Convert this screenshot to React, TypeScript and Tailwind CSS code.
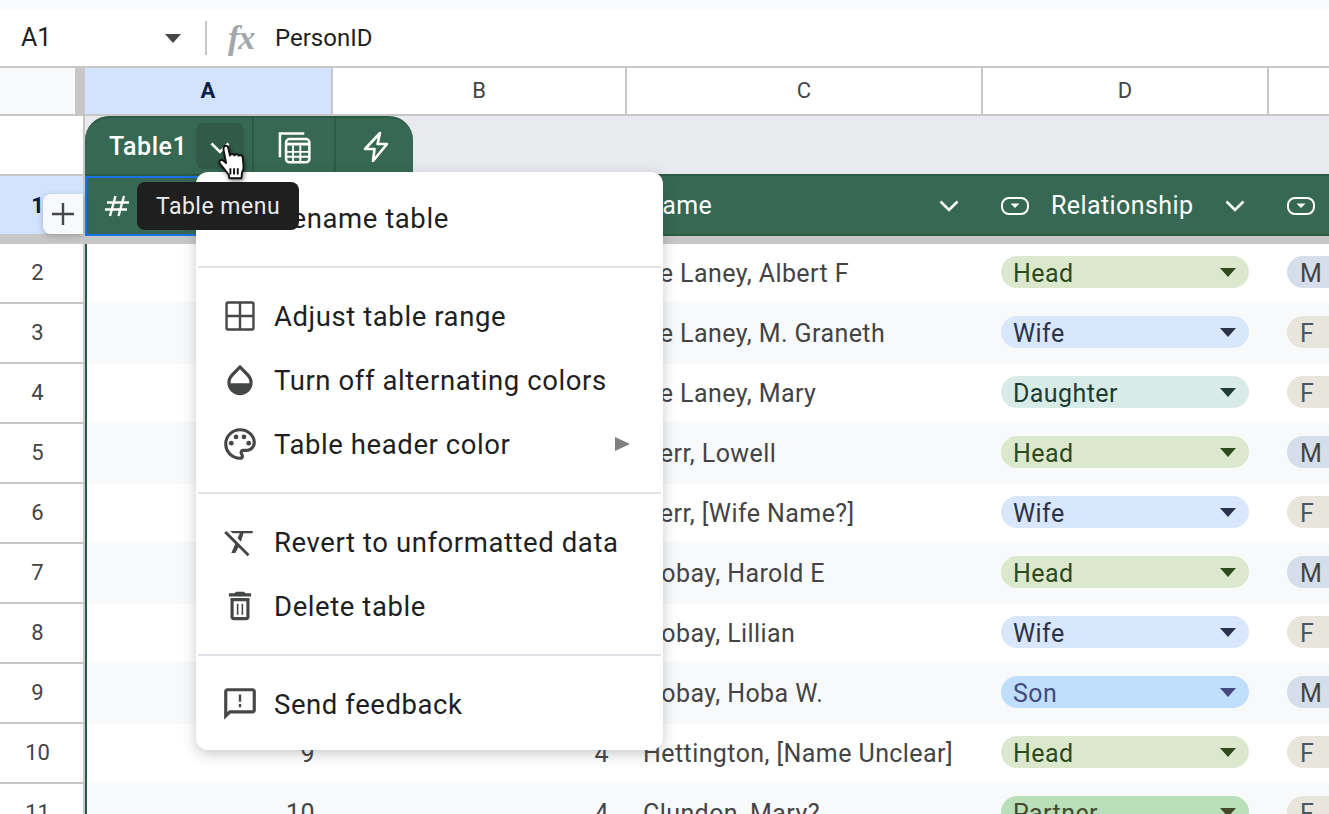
import React from 'react';

const pillStyles = {
  Head: { box: 'bg-[#dce8cd] text-[#2e4a1c]', caret: '#2e4a1c' },
  Wife: { box: 'bg-[#d9e7fc] text-[#2b3349]', caret: '#2b3349' },
  Daughter: { box: 'bg-[#d9ebe7] text-[#1b3b33]', caret: '#1b3b33' },
  Son: { box: 'bg-[#bfdffc] text-[#454a7e]', caret: '#454a7e' },
  Partner: { box: 'bg-[#b9e0b9] text-[#45492a]', caret: '#45492a' },
};

const rows = [
  { n: 2, a: '', b: '', name: 'De Laney, Albert F', rel: 'Head', sex: 'M' },
  { n: 3, a: '', b: '', name: 'De Laney, M. Graneth', rel: 'Wife', sex: 'F' },
  { n: 4, a: '', b: '', name: 'De Laney, Mary', rel: 'Daughter', sex: 'F' },
  { n: 5, a: '', b: '', name: 'Derr, Lowell', rel: 'Head', sex: 'M' },
  { n: 6, a: '', b: '', name: 'Derr, [Wife Name?]', rel: 'Wife', sex: 'F' },
  { n: 7, a: '', b: '', name: 'Hobay, Harold E', rel: 'Head', sex: 'M' },
  { n: 8, a: '', b: '', name: 'Hobay, Lillian', rel: 'Wife', sex: 'F' },
  { n: 9, a: '', b: '', name: 'Hobay, Hoba W.', rel: 'Son', sex: 'M' },
  { n: 10, a: '9', b: '4', name: 'Hettington, [Name Unclear]', rel: 'Head', sex: 'F' },
  { n: 11, a: '10', b: '4', name: 'Clundon, Mary?', rel: 'Partner', sex: 'F' },
] as const;

const Caret = ({ color, className }: { color: string; className?: string }) => (
  <svg width="16" height="9" viewBox="0 0 16 9" className={className}>
    <path d="M0 0h16L8 9z" fill={color} />
  </svg>
);

const Chevron = ({ className }: { className?: string }) => (
  <svg width="20" height="12" viewBox="0 0 20 12" className={className}>
    <path d="M1.500 1.500 10 10l8.500-8.500" fill="none" stroke="#fff" strokeWidth="2.600" />
  </svg>
);

const DropdownType = () => (
  <svg width="28" height="18" viewBox="0 0 28 18" className="shrink-0">
    <rect x="1" y="1" width="26" height="16" rx="7" fill="none" stroke="#fff" strokeWidth="2" />
    <path d="M9.500 6.500h9L14 11z" fill="#fff" />
  </svg>
);

const HashIcon = () => (
  <svg width="24" height="24" viewBox="0 0 24 24" fill="none" className="shrink-0">
    <path d="M10.500 2 5 22M19 2l-5.500 20M2 8.500h22M0 15.500h22" stroke="#fff" strokeWidth="2.400" />
  </svg>
);

const MenuIcon = ({ children }: { children: React.ReactNode }) => (
  <svg width="38" height="38" viewBox="0 0 24 24" fill="#444746" className="shrink-0">
    {children}
  </svg>
);

const MenuItem = ({ icon, label, arrow }: { icon: React.ReactNode; label: string; arrow?: boolean }) => (
  <div className="flex h-16 items-center gap-[15px] pl-[25px] pr-[33px]">
    <MenuIcon>{icon}</MenuIcon>
    <span className="flex-1 pt-[2px] text-[27.5px] tracking-[0.58px] text-[#1f1f1f]">{label}</span>
    {arrow && (
      <svg width="15" height="14" viewBox="0 0 15 14">
        <path d="M0 0l15 7-15 7z" fill="#808080" />
      </svg>
    )}
  </div>
);

const Divider = () => <div className="mx-[2px] h-[2px] bg-[#e1e0e6]" />;

const BodyRow = ({ row }: { row: (typeof rows)[number] }) => {
  const alt = row.n % 2 === 1;
  const pill = pillStyles[row.rel];
  return (
    <div className="flex h-[60px]">
      <div className="flex w-[85px] shrink-0 items-center justify-center border-r-2 border-b-2 border-[#c7c7c7] bg-white pr-[8px] pb-[1px] text-[22px] text-[#444]">
        {row.n}
      </div>
      <div className="min-w-0 flex-1 border-l-2 border-[#2a5a45]">
        <div
          className={`grid h-full grid-cols-[246px_294px_356px_286px_1fr] items-center text-[25px] tracking-[0.42px] text-[#444] ${
            alt ? 'bg-[#f8f9fb] shadow-[0_-2px_0_#f8f9fb]' : 'bg-white'
          }`}
        >
          <div className="pr-[18px] text-right">{row.a}</div>
          <div className="pr-[18px] text-right">{row.b}</div>
          <div className="pl-[16px] whitespace-nowrap">{row.name}</div>
          <div className="pb-1 pl-[18px]">
            <div className={`flex h-8 w-[248px] items-center justify-between rounded-full pl-[12px] pr-[13px] ${pill.box}`}>
              <span className="pt-[3px]">{row.rel}</span>
              <Caret color={pill.caret} />
            </div>
          </div>
          <div className="pb-1 pl-[18px]">
            <div
              className={`flex h-8 w-[248px] items-center rounded-full pl-[13px] pt-[3px] ${
                row.sex === 'M' ? 'bg-[#d5deea] text-[#444]' : 'bg-[#e8e5dc] text-[#4a5566]'
              }`}
            >
              {row.sex}
            </div>
          </div>
        </div>
      </div>
    </div>
  );
};

const App = () => {
  return (
    <div className="relative h-[814px] w-[1329px] overflow-hidden bg-white font-['Roboto',sans-serif]">
      <div className="h-[10px] bg-[#f9fbfd]" />

      {/* formula bar */}
      <div className="flex h-[56px] items-center text-[25px] text-[#1f1f1f]">
        <span className="w-[165px] pl-[21px]">A1</span>
        <Caret color="#444746" />
        <div className="ml-[24px] h-[34px] w-[2px] bg-[#c7c7c7]" />
        <span className="ml-[21px] w-[47px] font-['Liberation_Serif',serif] text-[34px] font-bold italic leading-none tracking-[-1px] text-[#a3a7ab]">
          fx
        </span>
        <span className="text-[24px]">PersonID</span>
      </div>

      {/* column letters */}
      <div className="grid h-[50px] grid-cols-[85px_248px_294px_356px_286px_1fr] border-y-2 border-[#c7c7c7] text-[22px] text-[#444]">
        <div className="mr-0 border-r-[10px] border-[#c7c7c7] bg-[#f8f9fa]" />
        <div className="flex items-center justify-center border-r-2 border-[#c7c7c7] bg-[#d3e3fd] pb-[2px] font-bold text-[#041e49]">A</div>
        <div className="flex items-center justify-center border-r-2 border-[#c7c7c7] pb-[2px]">B</div>
        <div className="flex items-center justify-center border-r-2 border-[#c7c7c7] pb-[2px]">C</div>
        <div className="flex items-center justify-center border-r-2 border-[#c7c7c7] pb-[2px]">D</div>
        <div />
      </div>

      {/* table tab */}
      <div className="flex h-[58px]">
        <div className="w-[85px] shrink-0 border-r-2 border-[#c7c7c7] bg-white" />
        <div className="flex-1 bg-[#e8eaed]">
          <div className="flex h-full w-[328px] items-stretch rounded-t-[24px] border-t-2 border-[#2b5a46] bg-[#366853] text-white">
            <div className="flex w-[169px] items-center justify-between border-r-2 border-[#2b5a46] pl-[24px] pr-[8px]">
              <span className="pt-[2px] text-[25px] font-medium tracking-[0.5px]">Table1</span>
              <div className="flex h-[46px] w-[48px] items-center justify-center rounded-lg bg-[#2f5b48]">
                <Chevron className="mt-1" />
              </div>
            </div>
            <div className="flex w-[82px] items-center justify-center border-r-2 border-[#2b5a46] pt-[2px]">
              <svg width="33" height="33" viewBox="0 0 34 34" fill="none">
                <path d="M2 27V2.500h25" stroke="#fff" strokeWidth="2.600" />
                <rect x="8.300" y="8.300" width="24" height="24" rx="3.500" stroke="#fff" strokeWidth="2.600" />
                <path d="M8.300 12h24v3H8.300z" fill="#fff" />
                <path d="M15.500 15v16M23 15v16M9 21.500h23M9 26.500h23" stroke="#fff" strokeWidth="2" />
              </svg>
            </div>
            <div className="flex flex-1 items-center justify-center pl-[2px] pt-[2px]">
              <svg width="26" height="32" viewBox="0 0 26 32" fill="none">
                <path d="M17 2 2 18h9.500L10 30l14-17h-9.500z" stroke="#fff" strokeWidth="2.600" strokeLinejoin="round" />
              </svg>
            </div>
          </div>
        </div>
      </div>

      {/* table header row */}
      <div className="flex h-[62px]">
        <div className="flex w-[85px] shrink-0 items-center justify-center border-y-2 border-r-2 border-[#c7c7c7] bg-[#d3e3fd] pr-[8px] text-[22px] font-bold text-[#041e49]">
          1
        </div>
        <div className="grid flex-1 grid-cols-[248px_294px_356px_286px_1fr] items-center border-y-2 border-[#2b5a46] bg-[#366853] text-[25px] tracking-[0.42px] text-white">
          <div className="flex h-[60px] items-center border-2 border-[#1a73e8] pl-[18px]">
            <HashIcon />
          </div>
          <div className="flex items-center pl-[20px]">
            <HashIcon />
          </div>
          <div className="flex items-center justify-between pl-[17px] pr-[24px]">
            <span>Name</span>
            <Chevron />
          </div>
          <div className="flex items-center pl-[18px] pr-[24px]">
            <DropdownType />
            <span className="ml-[22px] flex-1">Relationship</span>
            <Chevron />
          </div>
          <div className="flex items-center pl-[18px]">
            <DropdownType />
          </div>
        </div>
      </div>

      <div className="h-2 bg-[#c7c7c7]" />

      {rows.map((row) => (
        <BodyRow key={row.n} row={row} />
      ))}

      {/* insert row button */}
      <div className="absolute left-[43px] top-[194px] flex h-10 w-10 items-center justify-center rounded-l-lg bg-[#f8f9fd] shadow-[0_2px_6px_rgba(60,64,67,0.3)]">
        <svg width="22" height="22" viewBox="0 0 22 22">
          <path d="M9.800 0h2.400v9.800H22v2.400h-9.800V22H9.800v-9.800H0V9.800h9.800z" fill="#444746" />
        </svg>
      </div>

      {/* table menu */}
      <div className="absolute left-[196px] top-[172px] w-[467px] rounded-xl bg-white py-[14px] shadow-[0_4px_14px_rgba(60,64,67,0.28)]">
        <div className="pb-4">
          <MenuItem icon={<path d="M3 14v4h4L17.810 7l-3.750-3.750L3 14z" />} label="Rename table" />
        </div>
        <Divider />
        <div className="py-4">
          <MenuItem
            label="Adjust table range"
            icon={
              <path
                d="M4.500 3.500h15a1 1 0 0 1 1 1v15a1 1 0 0 1-1 1h-15a1 1 0 0 1-1-1v-15a1 1 0 0 1 1-1zM12 3.500v17M3.500 12h17"
                fill="none"
                stroke="#444746"
                strokeWidth="1.500"
              />
            }
          />
          <MenuItem
            label="Turn off alternating colors"
            icon={
              <path d="M17.660 8 12 2.350 6.340 8C4.780 9.560 4 11.640 4 13.640s.78 4.110 2.340 5.670 3.610 2.350 5.660 2.350 4.100-.79 5.660-2.350S20 15.640 20 13.640 19.220 9.560 17.660 8zM6 14c.01-2 .62-3.270 1.760-4.400L12 5.270l4.240 4.380C17.380 10.770 17.990 12 18 14H6z" />
            }
          />
          <MenuItem
            label="Table header color"
            arrow
            icon={
              <>
                <path d="M12 22C6.490 22 2 17.510 2 12S6.490 2 12 2s10 4.040 10 9c0 3.310-2.690 6-6 6h-1.770c-.28 0-.5.22-.5.5 0 .12.05.23.13.33.41.47.64 1.060.64 1.670A2.500 2.500 0 0 1 12 22zm0-18c-4.410 0-8 3.590-8 8s3.590 8 8 8c.28 0 .5-.22.5-.5a.54.54 0 0 0-.14-.35c-.41-.46-.63-1.050-.63-1.650a2.500 2.500 0 0 1 2.500-2.500H16c2.210 0 4-1.790 4-4 0-3.860-3.590-7-8-7z" />
                <circle cx="6.500" cy="11.500" r="1.500" />
                <circle cx="9.500" cy="7.500" r="1.500" />
                <circle cx="14.500" cy="7.500" r="1.500" />
                <circle cx="17.500" cy="11.500" r="1.500" />
              </>
            }
          />
        </div>
        <Divider />
        <div className="py-4">
          <MenuItem
            label="Revert to unformatted data"
            icon={
              <path d="M6 5v.18L7.500 6.500h4.400l-1.400 3.180 2.100 2.100L14.210 6.500H20V5H6zM3.270 5 2 6.270l6.970 6.970L6.500 19h2.500l2.070-3.660L16.730 21 18 19.730 3.550 5.270 3.270 5z" />
            }
          />
          <MenuItem
            label="Delete table"
            icon={
              <path d="M16 9v10H8V9h8m-1.500-6h-5l-1 1H5v2h14V4h-3.500l-1-1zM18 7H6v12c0 1.100.9 2 2 2h8c1.100 0 2-.9 2-2V7zM10 10.500h1v7h-1zM13 10.500h1v7h-1z" />
            }
          />
        </div>
        <Divider />
        <div className="pt-4">
          <MenuItem
            label="Send feedback"
            icon={
              <path d="M20 2H4c-1.100 0-2 .9-2 2v18l4-4h14c1.100 0 2-.9 2-2V4c0-1.100-.9-2-2-2zm0 14H5.170L4 17.170V4h16v12zM11.250 12h1.500v2h-1.500zM11.250 6h1.500v4.500h-1.500z" />
            }
          />
        </div>
      </div>

      {/* tooltip */}
      <div className="absolute left-[137px] top-[182px] flex h-12 w-[162px] items-center justify-center rounded-lg bg-[#1f1f1f] pt-[2px] text-[23px] tracking-[0.5px] text-[#e8eaed]">
        Table menu
      </div>

      {/* mouse pointer */}
      <svg width="37" height="40" viewBox="0 0 34 38" className="absolute left-[214px] top-[143px] drop-shadow-[1px_2px_2px_rgba(0,0,0,0.45)]">
        <path
          d="M9 3.500c1.500-1.600 3.600-.8 4 1.200l1.600 7.300c.3-1.900 3.500-2.200 4.200-.2.500-1.600 3.500-1.600 4.100.4.800-1.200 3.500-.8 3.800 1.300l.8 8.500c.2 2.500-.4 4.400-1.500 6.200l-.5 5.300H14l-.5-3.300c-1.500-1.800-3.400-4.300-5.400-6.800-1.400-1.800-3.100-3.300-3.500-5-.4-1.900 1.700-2.900 3.300-1.900l3 2.400L8.600 7c-.3-1.300-.2-2.600.4-3.500z"
          fill="#fff"
          stroke="#111"
          strokeWidth="1.800"
          strokeLinejoin="round"
        />
        <path d="M15 24v6M18.500 24v6M22 24v6" stroke="#111" strokeWidth="1.800" />
      </svg>
    </div>
  );
};

export default App;
